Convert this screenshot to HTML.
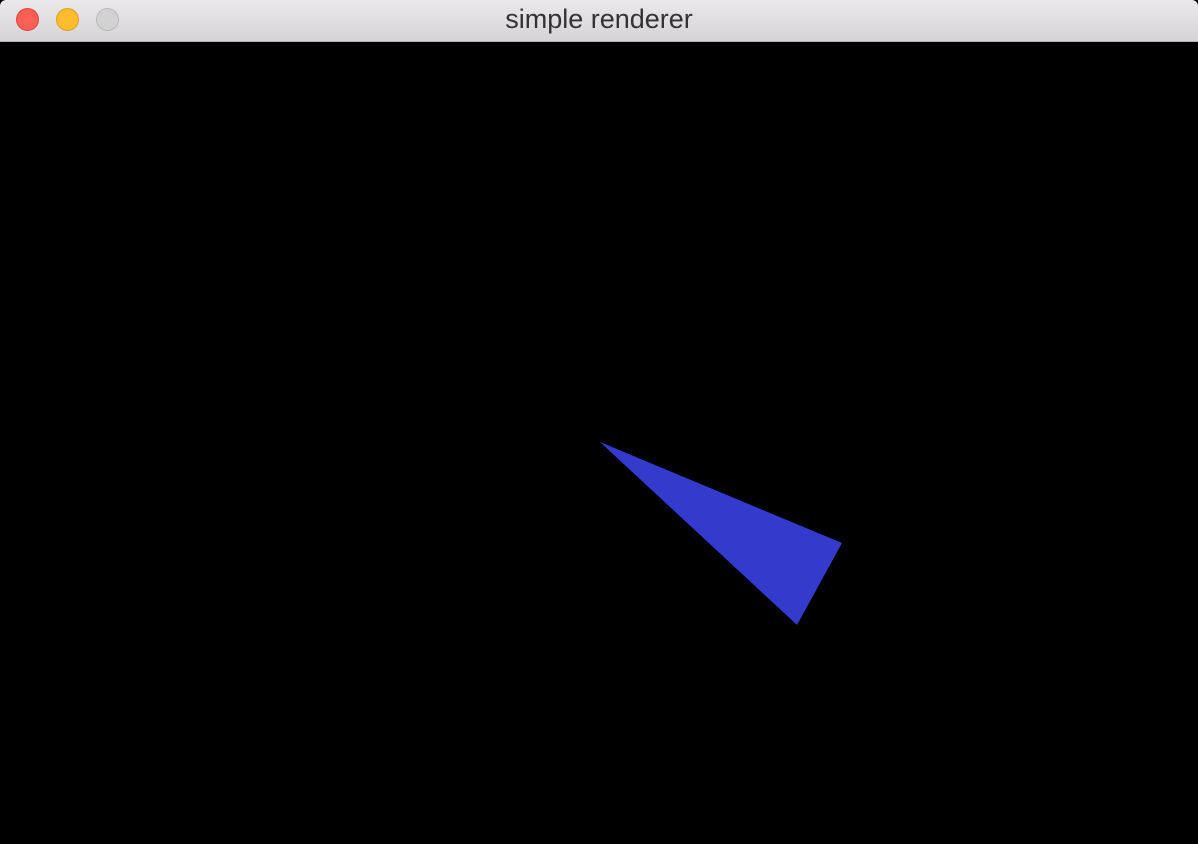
<!DOCTYPE html>
<html><head><style>
html,body{margin:0;padding:0;width:1198px;height:844px;overflow:hidden;background:#000;}
.bar{position:absolute;left:0;top:0;width:1198px;height:41px;background:linear-gradient(#ebe9eb,#d5d3d5);border-bottom:1px solid #b8b6b8;border-radius:6px 6px 0 0;}
.dot{position:absolute;top:8px;width:23px;height:23px;border-radius:50%;box-sizing:border-box;}
.t{position:absolute;left:0;width:1198px;top:4px;text-align:center;font:27px "Liberation Sans",sans-serif;color:#333;}
</style></head><body>
<div class="bar">
<div class="dot" style="left:16px;background:#fd5f57;border:1px solid #e0443e"></div>
<div class="dot" style="left:56px;background:#febc2e;border:1px solid #dea123"></div>
<div class="dot" style="left:96px;background:#d3d2d3;border:1px solid #b9b8b9"></div>
<div class="t">simple renderer</div>
</div>
<svg style="position:absolute;left:0;top:0" width="1198" height="844"><polygon points="600,442 842,543 797,625" fill="#333acc"/></svg>
</body></html>
